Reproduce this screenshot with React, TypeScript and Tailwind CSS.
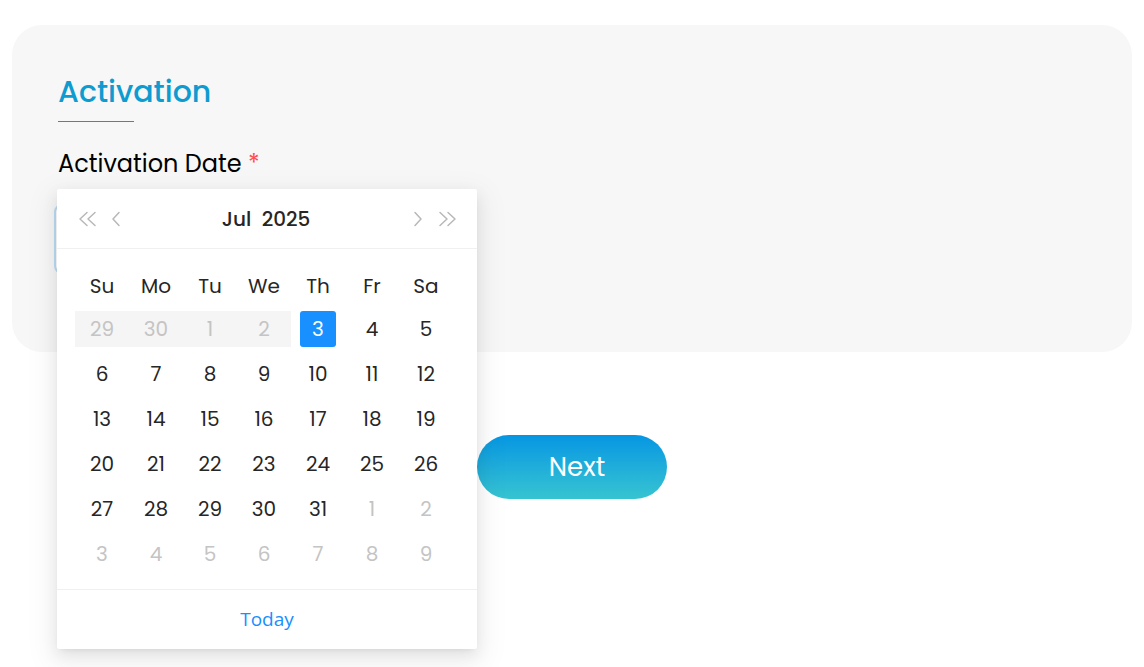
import React from "react";

const F = "font-['Poppins','Inter','Noto_Sans',sans-serif]";

function DoubleLeft() {
  return (
    <svg width="19" height="16" viewBox="0 0 19 16" fill="none" stroke="#b8b8b8" strokeWidth="1.5" strokeLinecap="round" strokeLinejoin="round">
      <polyline points="9,1.5 2,8 9,14.5" />
      <polyline points="17,1.5 10,8 17,14.5" />
    </svg>
  );
}
function SingleLeft() {
  return (
    <svg width="10" height="16" viewBox="0 0 10 16" fill="none" stroke="#b8b8b8" strokeWidth="1.5" strokeLinecap="round" strokeLinejoin="round">
      <polyline points="8,1.5 2,8 8,14.5" />
    </svg>
  );
}
function SingleRight() {
  return (
    <svg width="10" height="16" viewBox="0 0 10 16" fill="none" stroke="#b8b8b8" strokeWidth="1.5" strokeLinecap="round" strokeLinejoin="round">
      <polyline points="2,1.5 8,8 2,14.5" />
    </svg>
  );
}
function DoubleRight() {
  return (
    <svg width="19" height="16" viewBox="0 0 19 16" fill="none" stroke="#b8b8b8" strokeWidth="1.5" strokeLinecap="round" strokeLinejoin="round">
      <polyline points="2,1.5 9,8 2,14.5" />
      <polyline points="10,1.5 17,8 10,14.5" />
    </svg>
  );
}

type Cell = { d: number; muted?: boolean; disabled?: boolean; selected?: boolean };

const rows: Cell[][] = [
  [
    { d: 29, muted: true, disabled: true },
    { d: 30, muted: true, disabled: true },
    { d: 1, muted: true, disabled: true },
    { d: 2, muted: true, disabled: true },
    { d: 3, selected: true },
    { d: 4 },
    { d: 5 },
  ],
  [6, 7, 8, 9, 10, 11, 12].map((d) => ({ d })),
  [13, 14, 15, 16, 17, 18, 19].map((d) => ({ d })),
  [20, 21, 22, 23, 24, 25, 26].map((d) => ({ d })),
  [{ d: 27 }, { d: 28 }, { d: 29 }, { d: 30 }, { d: 31 }, { d: 1, muted: true }, { d: 2, muted: true }],
  [3, 4, 5, 6, 7, 8, 9].map((d) => ({ d, muted: true })),
];

const weekdays = ["Su", "Mo", "Tu", "We", "Th", "Fr", "Sa"];

function Calendar() {
  return (
    <div className="absolute left-[57px] top-[189px] w-[420px] h-[460px] bg-white rounded-[2px] shadow-[0_6px_16px_0_rgba(0,0,0,0.08),0_3px_6px_-4px_rgba(0,0,0,0.12),0_9px_28px_8px_rgba(0,0,0,0.05)] flex flex-col">
      <div className="h-[60px] border-b border-[#f0f0f0] flex items-center pl-[21px] pr-[20px]">
        <div className="flex items-center gap-[14px]">
          <DoubleLeft />
          <SingleLeft />
        </div>
        <div className="flex-1 text-center text-[20px] font-medium text-[#262626] pr-[2px]">
          Jul&nbsp;&nbsp;2025
        </div>
        <div className="flex items-center gap-[15px]">
          <SingleRight />
          <DoubleRight />
        </div>
      </div>
      <div className="pl-[18px] pt-[16px]">
        <div className="w-[378px] grid grid-cols-7 h-[41px] items-center">
          {weekdays.map((w) => (
            <div key={w} className="text-center text-[20px] text-[#262626]">
              {w}
            </div>
          ))}
        </div>
        {rows.map((r, i) => (
          <div key={i} className="w-[378px] grid grid-cols-7 h-[45px] items-center">
            {r.map((c, j) => (
              <div
                key={j}
                className={
                  "h-[36px] flex items-center justify-center " +
                  (c.disabled ? "bg-[#f5f5f5] " : "")
                }
              >
                <div
                  className={
                    "w-[36px] h-[36px] flex items-center justify-center text-[20px] rounded-[3px] " +
                    (c.selected
                      ? "bg-[#1890ff] text-white"
                      : c.muted
                      ? "text-[#c4c4c4]"
                      : "text-[#262626]")
                  }
                >
                  {c.d}
                </div>
              </div>
            ))}
          </div>
        ))}
      </div>
      <div className="mt-auto h-[60px] border-t border-[#f0f0f0] flex items-center justify-center">
        <span className="text-[19px] text-[#1890ff] font-['Open_Sans',sans-serif]">Today</span>
      </div>
    </div>
  );
}

export default function App() {
  return (
    <div className={"relative w-[1144px] h-[667px] bg-white overflow-hidden " + F}>
      <div className="mx-[12px] mt-[25px] h-[327px] rounded-[30px] bg-[#f7f7f7] pl-[46px] pt-[48px]">
        <h2 className="text-[30px] leading-[38px] font-medium text-[#0e9bd0]">Activation</h2>
        <div className="w-[76px] h-px bg-[#2a8fc2] mt-[10px]" />
        <div className="mt-[27px] text-[24px] leading-[30px] font-normal text-black">
          Activation Date <span className="text-[#ff4d4f]">*</span>
        </div>
        <div className="mt-[25px] ml-[-4px] w-[420px] h-[70px] bg-white rounded-[8px] border-[2px] border-[#b9dcf5]" />
      </div>
      <div className="flex justify-center mt-[83px]">
        <button className="w-[190px] h-[64px] rounded-full bg-gradient-to-b from-[#0596e2] to-[#36c4d1] text-white text-[26px] pl-[10px]">
          Next
        </button>
      </div>
      <Calendar />
    </div>
  );
}
